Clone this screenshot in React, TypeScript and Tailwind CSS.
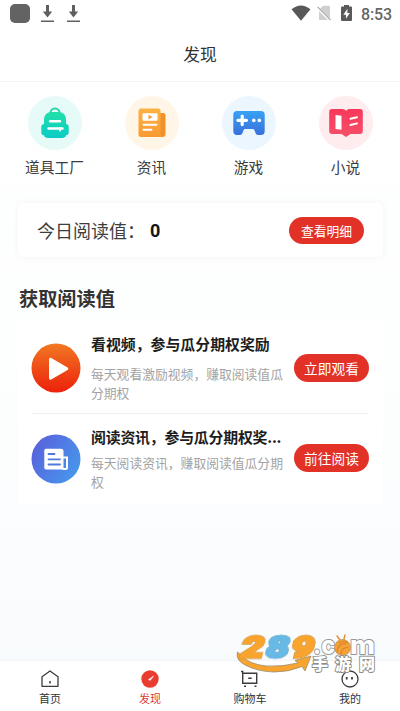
import type { ReactNode } from 'react'

interface Shortcut {
  label: string
  circle: string
  icon: ReactNode
}

interface Task {
  title: string
  desc: string
  action: string
  titleClass: string
  descClass: string
  buttonClass: string
  icon: ReactNode
}

function DownloadIcon() {
  return (
    <svg width="13" height="18" viewBox="0 0 13 18" fill="#5f5f5f">
      <path d="M5 0h3v6.500h3.200L6.500 12.600 1.800 6.500H5z" />
      <path d="M0 15.500h13v1.500H0z" />
    </svg>
  )
}

function StatusBar() {
  return (
    <div className="flex h-7 items-start justify-between pl-[10px] pr-[9px]">
      <div className="flex items-start">
        <div className="mt-1 h-[19px] w-5 rounded-[5px] bg-[#636363]" />
        <div className="ml-[11px] mt-[5px] flex gap-[13px]">
          <DownloadIcon />
          <DownloadIcon />
        </div>
      </div>
      <div className="flex items-start">
        <svg className="mt-[5px]" width="20" height="16" viewBox="0 0 20 16">
          <path d="M.5 4.300Q10-3.400 19.500 4.300L10 15.700z" fill="#585858" />
        </svg>
        <svg className="ml-[6px] mt-[5px]" width="15" height="17" viewBox="0 0 15 17">
          <path d="M6 .8h6q1 0 1 1V15H3q-1 0-1-1V4.800z" fill="#cfcfcf" />
          <path d="M.6 2.800l13 13" stroke="#fff" strokeWidth="2.600" />
          <path d="M.6 1.800l13 13.400" stroke="#a8a8a8" strokeWidth="1.200" />
        </svg>
        <svg className="ml-[9px] mt-[5px]" width="11" height="17" viewBox="0 0 11 17">
          <path d="M3 0h5v1.600h2q1 0 1 1V15q0 1-1 1H1q-1 0-1-1V2.600q0-1 1-1h2z" fill="#5a5a5a" />
          <path d="M6.500 3.800L2.300 9.700h2.600v4l4-5.800H6.300z" fill="#fff" />
        </svg>
        <span className="ml-[9px] mt-[5px] w-[30px] whitespace-nowrap font-['Roboto'] text-[16px] font-medium leading-5 tracking-[-0.1px] text-[#666666]">
          8:53
        </span>
      </div>
    </div>
  )
}

const shortcuts: Shortcut[] = [
  {
    label: '道具工厂',
    circle: 'bg-[#e6faf7]',
    icon: (
      <svg width="28" height="32" viewBox="0 0 28 32">
        <defs>
          <linearGradient id="bag" x1="0" y1="0" x2="0" y2="1">
            <stop offset="0" stopColor="#22dfa8" />
            <stop offset="1" stopColor="#0accc5" />
          </linearGradient>
        </defs>
        <path d="M9.300 6.500a4.700 5 0 0 1 9.400 0" fill="none" stroke="#20d7a9" strokeWidth="2" />
        <path
          d="M9.500 5h9q6 .8 6.500 7.500V17q2.700.4 2.700 3v5.500q0 2.500-2.700 2.800-.6 2.700-4 2.700H7q-3.400 0-4-2.700Q.3 28 .3 25.500V20q0-2.600 2.700-3v-4.500Q3.500 5.800 9.500 5z"
          fill="url(#bag)"
        />
        <path d="M9 14.300h10M7.500 21.500h14" stroke="#fff" strokeWidth="2.400" strokeLinecap="round" />
        <path d="M19 21.500v2" stroke="#fff" strokeWidth="2" strokeLinecap="round" />
      </svg>
    ),
  },
  {
    label: '资讯',
    circle: 'bg-[#fff6e8]',
    icon: (
      <svg width="28" height="30" viewBox="0 0 28 30">
        <defs>
          <linearGradient id="news" x1="0" y1="0" x2="0" y2="1">
            <stop offset="0" stopColor="#fbb343" />
            <stop offset="1" stopColor="#f89a32" />
          </linearGradient>
        </defs>
        <path d="M20 5h5q2.500 0 2.500 2.500V26q0 3-3 3H18z" fill="#f39129" />
        <path d="M3 .5h17q2.600 0 2.600 2.600v23q0 2 1.800 2.900H3q-2.500 0-2.500-2.500V3Q.5.500 3 .5z" fill="url(#news)" />
        <rect x="4.500" y="5.300" width="15" height="7.500" rx="1" fill="#fff" />
        <path d="M10.500 6.800v4.600l4-2.300z" fill="#f79a32" />
        <path d="M5.500 16.700h13M5.500 21.700h8" stroke="#fff" strokeWidth="2" strokeLinecap="round" />
      </svg>
    ),
  },
  {
    label: '游戏',
    circle: 'bg-[#ecf6ff]',
    icon: (
      <svg width="32" height="26" viewBox="0 0 32 26">
        <defs>
          <linearGradient id="game" x1="0" y1="0" x2="0" y2="1">
            <stop offset="0" stopColor="#38a2f5" />
            <stop offset="1" stopColor="#3970dc" />
          </linearGradient>
        </defs>
        <path
          d="M4 1h24q3.700 0 3.700 3.700v16q0 4.300-3.700 4.300h-3q-1.800 0-2.500-2l-1-2.700Q21 19 19.500 19h-7q-1.500 0-2 1.300l-1 2.700Q8.800 25 7 25H4Q.3 25 .3 20.700v-16Q.3 1 4 1z"
          fill="url(#game)"
        />
        <path d="M9.200 6v8.600M4.900 10.300h8.600" stroke="#fff" strokeWidth="3.200" strokeLinecap="round" />
        <circle cx="20.800" cy="10.400" r="1.800" fill="#fff" />
        <circle cx="26.300" cy="10.400" r="1.800" fill="#fff" />
      </svg>
    ),
  },
  {
    label: '小说',
    circle: 'bg-[#ffecef]',
    icon: (
      <svg width="34" height="30" viewBox="0 0 34 30">
        <defs>
          <linearGradient id="book" x1="0" y1="0" x2="0" y2="1">
            <stop offset="0" stopColor="#f8385b" />
            <stop offset="1" stopColor="#f65069" />
          </linearGradient>
        </defs>
        <path
          d="M3 1h10.500q2 0 3.500 1.700Q18.500 1 20.500 1H31q2.800 0 2.800 2.800V23q0 3-2.800 3H21.500L17 29l-4.500-3H3Q.2 26 .2 23V3.800Q.2 1 3 1z"
          fill="url(#book)"
        />
        <path d="M6.500 7l6 .8v14l-6-.8z" fill="#fff" />
        <path d="M21.500 10.800l6.500-1.600M21.500 17l6.500-1.600" stroke="#fff" strokeWidth="2" strokeLinecap="round" />
      </svg>
    ),
  },
]

const tasks: Task[] = [
  {
    title: '看视频，参与瓜分期权奖励',
    desc: '每天观看激励视频，赚取阅读值瓜分期权',
    action: '立即观看',
    titleClass: 'mt-[10px]',
    descClass: 'mt-[9px]',
    buttonClass: 'mt-8',
    icon: (
      <svg className="mt-[21px]" width="50" height="50" viewBox="0 0 50 50">
        <defs>
          <linearGradient id="play" x1="0" y1="0" x2="0" y2="1">
            <stop offset="0" stopColor="#f17822" />
            <stop offset="1" stopColor="#ed200c" />
          </linearGradient>
        </defs>
        <circle cx="25" cy="25" r="24.500" fill="url(#play)" />
        <path d="M19.500 16.200v19l16.300-9.500z" fill="#fff" stroke="#fff" strokeWidth="3" strokeLinejoin="round" />
      </svg>
    ),
  },
  {
    title: '阅读资讯，参与瓜分期权奖...',
    desc: '每天阅读资讯，赚取阅读值瓜分期权',
    action: '前往阅读',
    titleClass: 'mt-[11px] tracking-[-0.2px]',
    descClass: 'mt-[5px]',
    buttonClass: 'mt-[30px]',
    icon: (
      <svg className="mt-5" width="50" height="50" viewBox="0 0 50 50">
        <defs>
          <linearGradient id="read" x1="0" y1="0.200" x2="1" y2="0.800">
            <stop offset="0" stopColor="#5960dc" />
            <stop offset="1" stopColor="#4799ec" />
          </linearGradient>
        </defs>
        <circle cx="25" cy="25" r="24.500" fill="url(#read)" />
        <path d="M15 14.700h15q2.500 0 2.500 2.500V35.500H15q-1.700 0-1.700-1.700V16.400q0-1.700 1.700-1.700z" fill="#fff" />
        <path d="M32 23.500h4v10q0 1.500-1.500 1.500h-3" fill="none" stroke="#fff" strokeWidth="2" />
        <path d="M17.500 20h6M17.500 25.300h11.500M17.500 30.500h11.500" stroke="#5378dd" strokeWidth="1.800" strokeLinecap="round" />
      </svg>
    ),
  },
]

function TaskRow({ task, divider }: { task: Task; divider: boolean }) {
  return (
    <div className={divider ? 'flex h-[92px] border-b border-[#f1f1f1]' : 'flex h-[90px]'}>
      <div className="w-[60px] shrink-0">{task.icon}</div>
      <div className="w-[193px] shrink-0">
        <h3 className={`whitespace-nowrap text-[14.900px] font-bold leading-6 text-[#1d1d1d] ${task.titleClass}`}>
          {task.title}
        </h3>
        <p className={`break-all text-[12.800px] leading-[18.500px] text-[#a3a3a3] ${task.descClass}`}>{task.desc}</p>
      </div>
      <button
        className={`ml-[10px] h-7 w-[75px] shrink-0 rounded-full bg-[#e23228] text-[13.700px] leading-[27px] text-white ${task.buttonClass}`}
      >
        {task.action}
      </button>
    </div>
  )
}

const navItems = [
  {
    label: '首页',
    color: 'text-[#333333]',
    icon: (
      <svg width="20" height="20" viewBox="0 0 20 20" fill="none" stroke="#3c3c3c" strokeWidth="1.300">
        <path d="M2 7.800L10 2l8 5.800v9.500H2z" strokeLinejoin="round" />
        <path d="M10 12v2.500" strokeWidth="1.500" />
      </svg>
    ),
  },
  {
    label: '发现',
    color: 'text-[#dc3a30]',
    icon: (
      <svg width="20" height="20" viewBox="0 0 20 20">
        <circle cx="10" cy="10" r="8.700" fill="#e93d30" />
        <path d="M8.500 10.600l5.200-3.600-3.600 4.500z" fill="#fff" stroke="#fff" strokeWidth=".5" />
      </svg>
    ),
  },
  {
    label: '购物车',
    color: 'text-[#333333]',
    icon: (
      <svg width="20" height="20" viewBox="0 0 20 20" fill="none" stroke="#3c3c3c" strokeWidth="1.400">
        <path d="M1 2.500h1.700V14.300h14V4.300H2.700M8.200 9.300h3.500" />
        <path d="M4 17.300h2M14.500 17.300h2" strokeWidth="1.600" />
      </svg>
    ),
  },
  {
    label: '我的',
    color: 'text-[#333333]',
    icon: (
      <svg width="20" height="20" viewBox="0 0 20 20" fill="none" stroke="#3c3c3c" strokeWidth="1.300">
        <circle cx="10" cy="10" r="8" />
        <path d="M6.700 8v2.500M12 8v2.500" strokeWidth="1.800" />
      </svg>
    ),
  },
]

function SiteLogo() {
  return (
    <svg
      className="pointer-events-none absolute left-[232px] top-[630px] overflow-visible"
      width="148"
      height="45"
      viewBox="0 0 148 45"
    >
      <path
        d="M5.500 22Q3 30 14 35.500 26 41.500 42 42 57 42 70 36.500l3 4.500L79 26l-16 4.500 3 2.500Q50 37 34 36 17 34 10 26z"
        fill="#f8a42e"
        stroke="#9b8b72"
        strokeWidth=".8"
      />
      <g
        className="drop-shadow-[0_0_0.7px_#6b6258]"
        fontFamily="Roboto, sans-serif"
        fontSize="30"
        fontWeight="900"
        strokeWidth="2.400"
        strokeLinejoin="miter"
        transform="translate(0 27.500) skewX(-14)"
      >
        <text x="7" fill="#f8a42e" stroke="#f8a42e" textLength="23" lengthAdjust="spacingAndGlyphs">2</text>
        <text x="57" fill="#f8a42e" stroke="#f8a42e" textLength="23" lengthAdjust="spacingAndGlyphs">9</text>
        <text x="32" fill="#67b9e6" stroke="#67b9e6" textLength="23" lengthAdjust="spacingAndGlyphs">8</text>
      </g>
      <g
        fontFamily="Inter, sans-serif"
        fontSize="25"
        fontWeight="800"
        fill="#fff"
        stroke="#979797"
        strokeWidth="1.800"
        strokeLinejoin="round"
        paintOrder="stroke"
      >
        <text x="81" y="24" textLength="22" lengthAdjust="spacingAndGlyphs">.c</text>
        <text x="118" y="24" textLength="25" lengthAdjust="spacingAndGlyphs">m</text>
      </g>
      <path d="M108 10l-3-4M112 9l1-4" stroke="#e58a31" strokeWidth="1.400" strokeLinecap="round" />
      <circle cx="110.500" cy="17.500" r="8" fill="#f6a038" stroke="#b48b52" strokeWidth=".7" />
      <path d="M105 22q1-9 9-8.500M109 24q0-6.500 7-6.500M107 13q5-3 9 0" fill="none" stroke="#d7802a" strokeWidth="1.100" />
      <g
        fontFamily="'Noto Sans CJK SC', sans-serif"
        fontSize="16"
        fontWeight="900"
        fill="#fff"
        stroke="#8c8c8c"
        strokeWidth="1.900"
        strokeLinejoin="round"
        paintOrder="stroke"
      >
        <text x="80" y="40">手</text>
        <text x="103" y="40">游</text>
        <text x="127" y="40">网</text>
      </g>
    </svg>
  )
}

export default function App() {
  return (
    <div className="relative flex h-[711px] w-[400px] flex-col overflow-hidden bg-gradient-to-b from-white via-[#fdfefe] to-[#f8fbfd] font-['Noto_Sans_CJK_SC',sans-serif]">
      <StatusBar />
      <header className="flex h-[54px] items-center justify-center border-b border-[#f5f5f5] bg-white text-[16.800px] text-[#333333]">
        发现
      </header>

      <div className="grid grid-cols-4 px-[6px] pt-[14px]">
        {shortcuts.map((item) => (
          <div key={item.label} className="flex flex-col items-center">
            <div className={`flex h-[54px] w-[54px] items-center justify-center rounded-full ${item.circle}`}>
              {item.icon}
            </div>
            <span className="mt-[5px] text-[14.700px] leading-6 text-[#3b3b3b]">{item.label}</span>
          </div>
        ))}
      </div>

      <section className="ml-[18px] mr-[17px] mt-6 flex h-[54px] items-center rounded-[6px] bg-white pl-[19px] pr-[19px] shadow-[0_0_6px_2px_rgba(0,0,0,0.03)]">
        <span className="text-[18px] text-[#3d3d3d]">今日阅读值：</span>
        <span className="ml-[5px] font-['Roboto'] text-[18px] font-bold text-[#151515]">0</span>
        <button className="ml-auto h-[27px] w-[75px] rounded-full bg-[#e23228] text-[12.800px] leading-[25px] text-white">
          查看明细
        </button>
      </section>

      <h2 className="ml-[19px] mt-[27px] text-[19.200px] font-bold leading-7 text-[#333333]">获取阅读值</h2>

      <section className="ml-[18px] mr-[17px] mt-[10px] h-[182px] bg-white pl-[13px] pr-[14px]">
        {tasks.map((task, i) => (
          <TaskRow key={task.action} task={task} divider={i === 0} />
        ))}
      </section>

      <nav className="mt-auto grid h-[50px] grid-cols-4 bg-white shadow-[0_-1px_2px_rgba(0,0,0,0.03)]">
        {navItems.map((item) => (
          <div key={item.label} className="flex flex-col items-center pt-2">
            {item.icon}
            <span className={`text-[11px] leading-[18px] ${item.color}`}>{item.label}</span>
          </div>
        ))}
      </nav>

      <SiteLogo />
    </div>
  )
}
